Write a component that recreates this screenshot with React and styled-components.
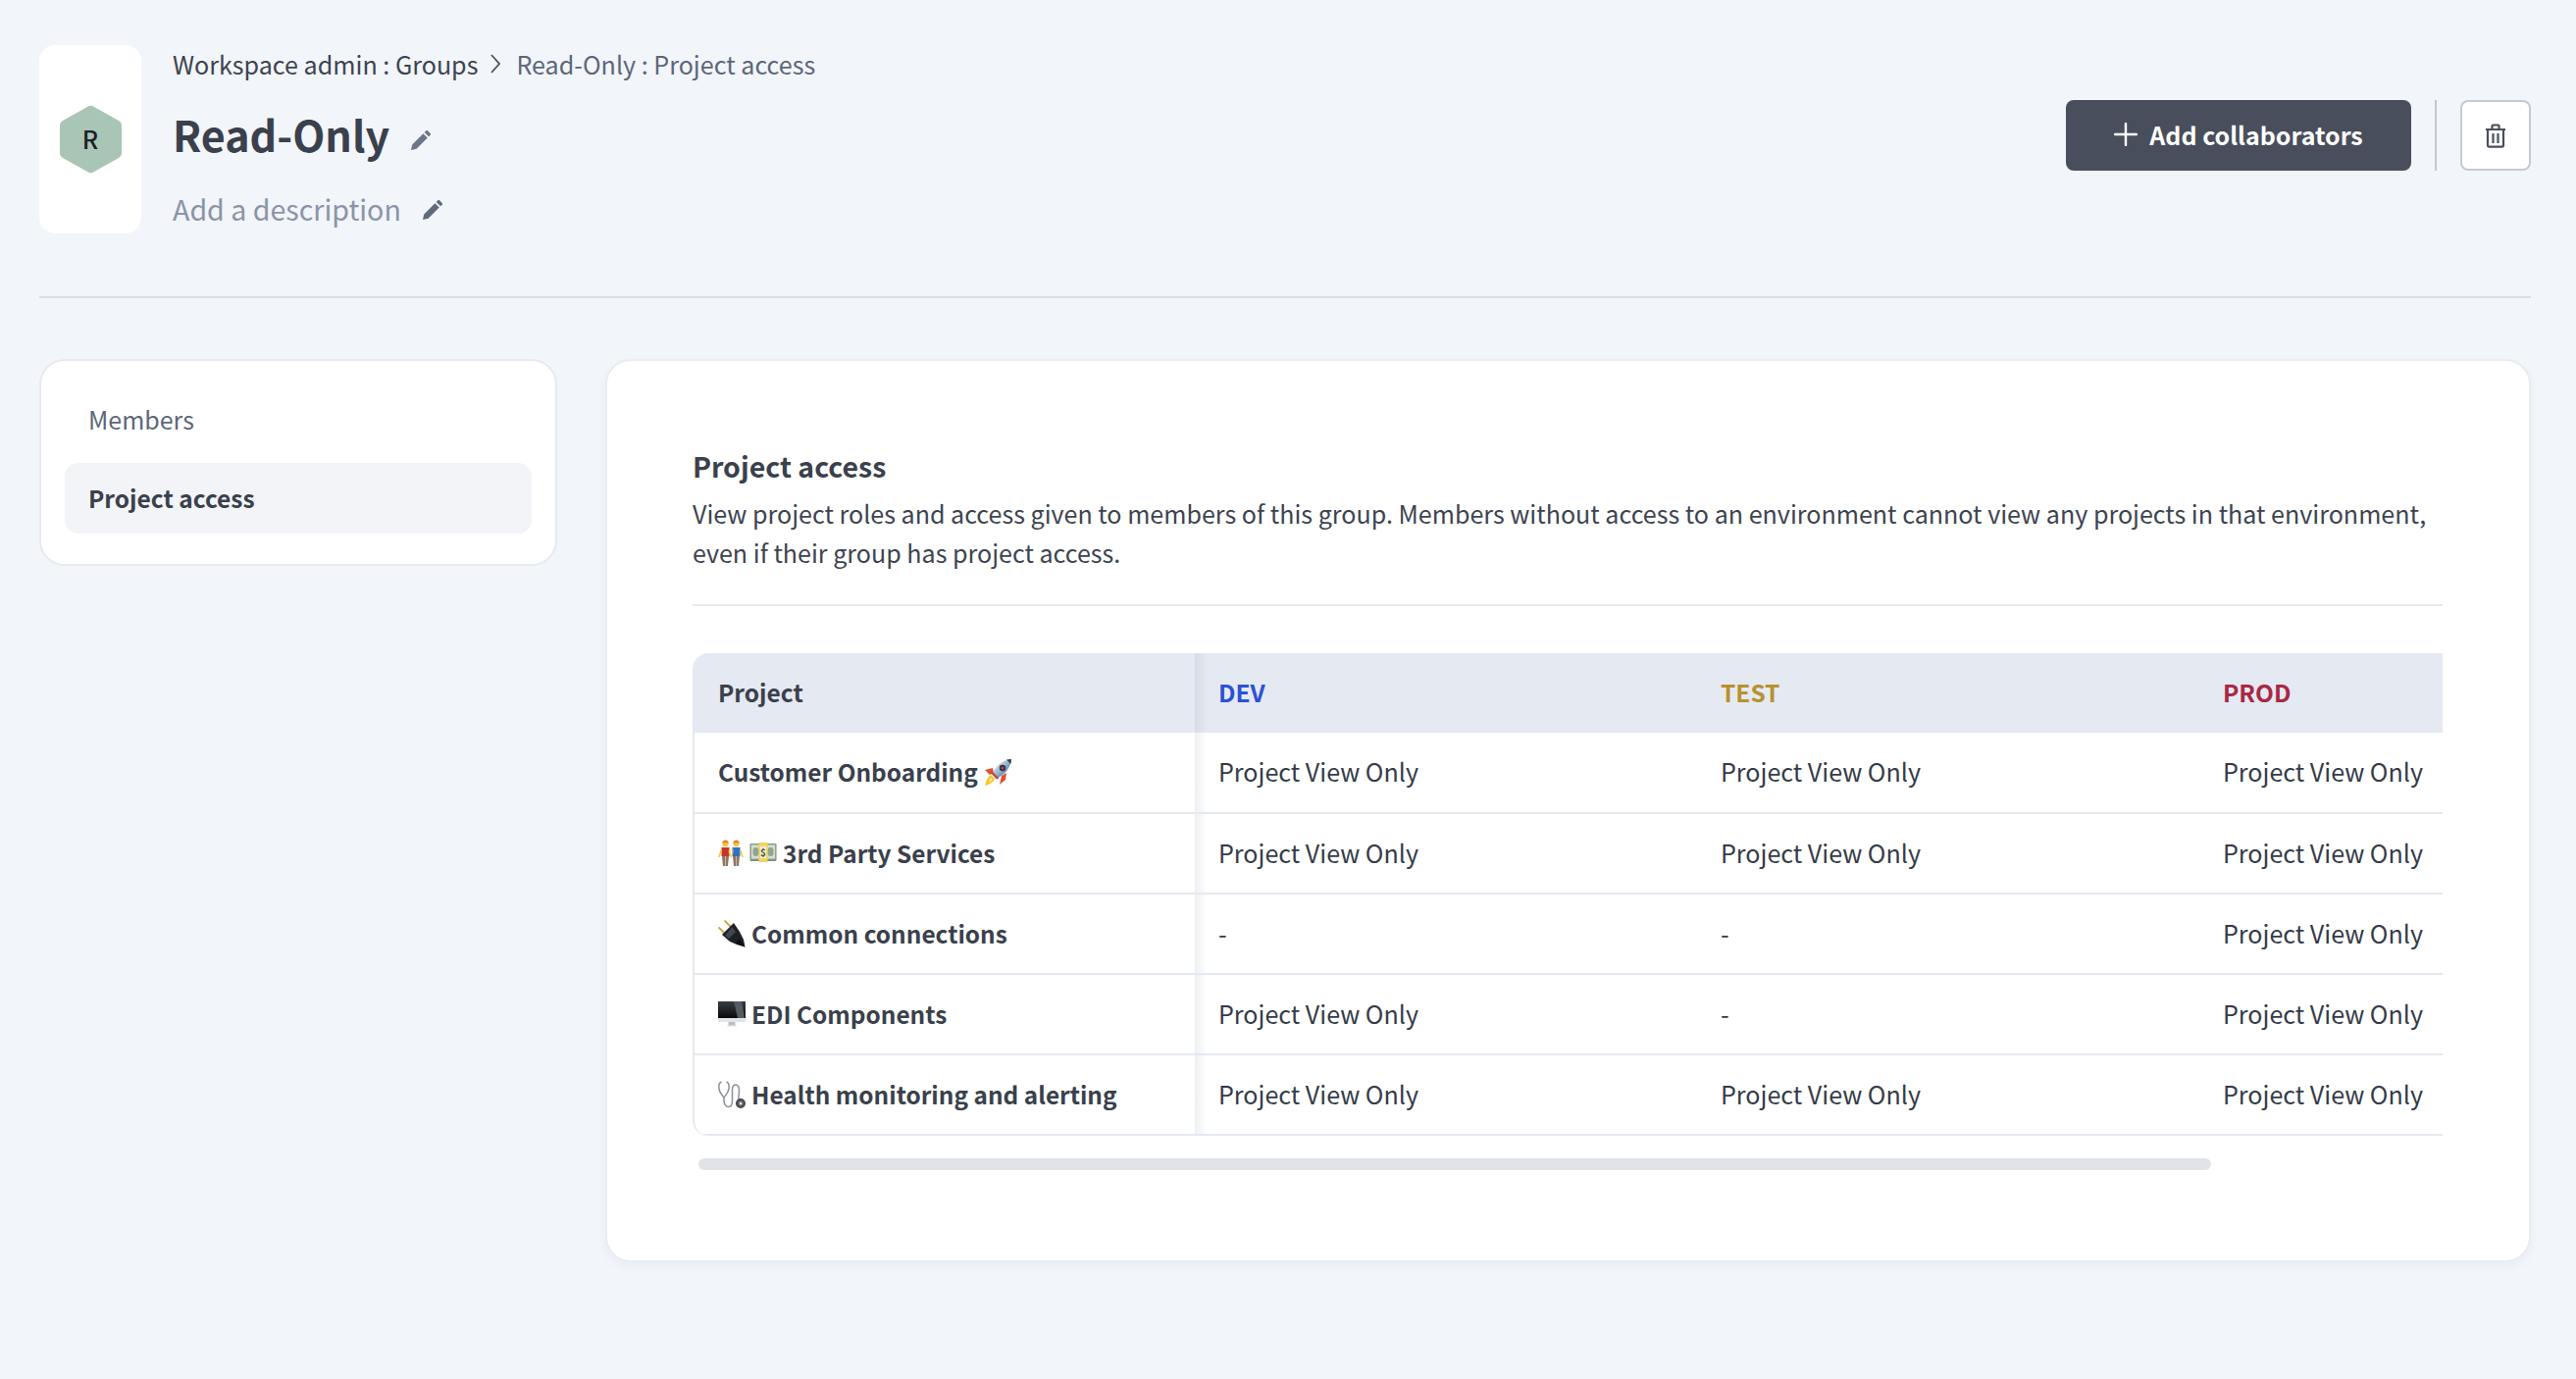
import React from 'react';
import styled, { createGlobalStyle } from 'styled-components';

const GlobalStyle = createGlobalStyle`
    html, body {
        margin: 0;
        padding: 0;
        background: #f2f5fa;
    }
    body {
        font-family: "Noto Sans CJK SC", "Noto Sans", sans-serif;
        color: #353b48;
    }
    * {
        box-sizing: border-box;
    }
`;

const Page = styled.div`
    width: 2626px;
    height: 1406px;
    padding: 46px 46px 0 40px;
    overflow: hidden;
`;

const Header = styled.header`
    display: flex;
    justify-content: space-between;
    padding-bottom: 64px;
    border-bottom: 2px solid #d9dee8;
`;

const HeaderLeft = styled.div`
    display: flex;
    gap: 32px;
`;

const IconCard = styled.div`
    width: 104px;
    height: 192px;
    background: white;
    border-radius: 16px;
    display: flex;
    align-items: center;
    justify-content: center;
`;

const Hexagon = styled.div`
    position: relative;
    width: 63px;
    height: 70px;
    display: flex;
    align-items: center;
    justify-content: center;
    font-size: 25px;
    font-weight: 500;
    color: #1c2129;

    svg {
        position: absolute;
        inset: 0;
    }
    span {
        position: relative;
        top: -1px;
    }
`;

const HeaderText = styled.div`
    display: flex;
    flex-direction: column;
`;

const Breadcrumb = styled.nav`
    display: flex;
    align-items: center;
    height: 40px;
    margin-top: -1px;
    font-size: 25.1px;
    line-height: 40px;
    color: #3d4450;
`;

const Crumb = styled.span`
    color: ${(p) => (p.$current ? '#5c6779' : '#3d4450')};
`;

const Chevron = styled.svg`
    width: 12px;
    height: 20px;
    margin: 0 15px 0 12px;
`;

const TitleRow = styled.div`
    display: flex;
    align-items: center;
    height: 60px;
    margin-top: 21px;
    gap: 21px;
`;

const Title = styled.h1`
    margin: 0;
    font-size: 43px;
    line-height: 60px;
    font-weight: 700;
    color: #3a404c;
`;

const DescriptionRow = styled.div`
    display: flex;
    align-items: center;
    height: 44px;
    margin-top: 25px;
    gap: 21px;
`;

const Description = styled.span`
    font-size: 28.6px;
    line-height: 44px;
    color: #8a94a6;
`;

const PencilIcon = styled.svg`
    width: 22px;
    height: 22px;
    color: ${(p) => (p.$dark ? '#5f6b7d' : '#6b7688')};
    margin-top: ${(p) => p.$top || 0}px;
`;

const Actions = styled.div`
    display: flex;
    align-items: stretch;
    height: 72px;
    margin-top: 56px;
`;

const PrimaryButton = styled.button`
    width: 352px;
    border: none;
    border-radius: 8px;
    background: #484e5b;
    color: white;
    font-family: inherit;
    font-size: 25px;
    font-weight: 700;
    display: flex;
    align-items: center;
    justify-content: center;
    gap: 12px;
    padding: 0 0 2px;
`;

const ActionSeparator = styled.div`
    width: 2px;
    margin: 0 24px;
    background: #c2c7d4;
`;

const IconButton = styled.button`
    width: 72px;
    border: 2px solid #c4c9d6;
    border-radius: 8px;
    background: white;
    display: flex;
    align-items: center;
    justify-content: center;
    padding: 0;
`;

const Body = styled.main`
    display: flex;
    align-items: flex-start;
    gap: 49px;
    margin-top: 62px;
`;

const Sidebar = styled.aside`
    width: 528px;
    flex-shrink: 0;
    padding: 24px 24px 23px;
    background: white;
    border: 2px solid #e6eaf1;
    border-radius: 26px;
`;

const SideItem = styled.div`
    height: 72px;
    margin-bottom: 8px;
    padding: 0 24px ${(p) => (p.$active ? '2px' : '3px')};
    display: flex;
    align-items: center;
    border-radius: 14px;
    font-size: ${(p) => (p.$active ? '24.5px' : '25px')};
    font-weight: ${(p) => (p.$active ? 600 : 400)};
    color: ${(p) => (p.$active ? '#3a404c' : '#5c6779')};
    background: ${(p) => (p.$active ? '#f2f4f8' : 'transparent')};
`;

const Panel = styled.section`
    flex: 1;
    min-width: 0;
    height: 921px;
    padding: 85px 88px 0 87px;
    background: white;
    border: 2px solid #e8ecf3;
    border-radius: 26px;
    box-shadow: 0 4px 10px rgba(60, 80, 120, 0.05);
`;

const PanelTitle = styled.h2`
    margin: 0;
    font-size: 28.5px;
    line-height: 44px;
    font-weight: 700;
    color: #3a404c;
`;

const PanelText = styled.p`
    margin: 6px 0 0;
    font-size: 25.07px;
    line-height: 40px;
    color: #3d4450;
    padding-bottom: 33px;
    border-bottom: 2px solid #e6e9f0;
`;

const TableWrap = styled.div`
    margin-top: 48px;
    overflow: hidden;
    border-left: 2px solid #e4e8ef;
    border-radius: 16px 0 0 16px;
`;

const Table = styled.table`
    width: 2046px;
    table-layout: fixed;
    border-collapse: collapse;
`;

const shadowRule = `
    &::after {
        content: '';
        position: absolute;
        top: 0;
        bottom: 0;
        left: 100%;
        width: 12px;
        background: linear-gradient(to right, rgba(90, 105, 135, 0.1), rgba(90, 105, 135, 0));
        z-index: 1;
    }
`;

const HeadCell = styled.th`
    position: relative;
    height: 81px;
    padding: 0 24px 3px;
    text-align: left;
    background: #e5e9f1;
    font-size: 24.5px;
    font-weight: 600;
    color: ${(p) => p.$color || '#3a404c'};

    ${(p) => p.$first && 'width: 510px;'}
    ${(p) => p.$first && shadowRule}
`;

const Cell = styled.td`
    height: 82px;
    padding: 0 24px 3px;
    font-size: 25.07px;
    color: #353b48;
    border-bottom: 2px solid #e4e8ef;
    white-space: nowrap;
    overflow: hidden;
`;

const ProjectCell = styled(Cell)`
    position: relative;
    overflow: visible;
    padding-bottom: 2px;
    font-size: 24.4px;
    font-weight: 600;
    color: #3a404c;
    ${shadowRule}
`;

const ProjectName = styled.div`
    display: flex;
    align-items: center;
    gap: 6px;
`;

const EmojiSvg = styled.svg`
    width: ${(p) => p.$w || 28}px;
    height: 28px;
    flex-shrink: 0;
    margin-top: 1px;
`;

const ScrollThumb = styled.div`
    width: 1542px;
    height: 12px;
    margin: 23px 0 0 6px;
    border-radius: 6px;
    background: #e1e3e8;
`;

const Pencil = ({ dark, top }) => (
    <PencilIcon viewBox="0 0 22 22" $dark={dark} $top={top}>
        <path
            fill="currentColor"
            d="M1 21l1.200-5.600L13.400 4.200l4.400 4.400L6.600 19.800 1 21zM14.700 2.900l1.600-1.600c.5-.5 1.200-.5 1.700 0l2.700 2.700c.5.5.5 1.200 0 1.700l-1.600 1.600-4.400-4.400z"
        />
    </PencilIcon>
);

const TrashIcon = () => (
    <svg width="22" height="25" viewBox="0 0 22 25" fill="none" stroke="#484e5b" strokeWidth="2.200">
        <path d="M1 6h20M7.500 6V2.500c0-.6.4-1 1-1h5c.6 0 1 .4 1 1V6" />
        <path d="M3 6v16c0 1 .6 1.600 1.600 1.600h12.800c1 0 1.600-.6 1.600-1.600V6" />
        <path d="M8.500 10v10M13.500 10v10" />
    </svg>
);

const PlusIcon = () => (
    <svg width="24" height="24" viewBox="0 0 24 24" stroke="white" strokeWidth="2.400" strokeLinecap="round">
        <path d="M12 1v22M1 12h22" />
    </svg>
);

const Rocket = () => (
    <EmojiSvg viewBox="0 0 29 28" $w={29}>
        <defs>
            <linearGradient id="rocketBody" x1="0.2" y1="0.2" x2="0.8" y2="0.8">
                <stop offset="0" stopColor="#dfe7ee" />
                <stop offset="0.55" stopColor="#8fb0cf" />
                <stop offset="1" stopColor="#3d6ea5" />
            </linearGradient>
        </defs>
        <path fill="#f9c623" d="M7 17l4 4c-1 3-5 6-10 7 1-5 3-9 6-11z" />
        <path fill="#fff1b0" d="M7 20l1.500 1.500c-.6 1.400-2 2.500-3.500 3 .4-1.600 1-3 2-4.500z" />
        <path fill="#e2502c" d="M9 10L1 12l5 5 4-2zM18 18l-2 9 6-5 1-7z" />
        <path fill="url(#rocketBody)" d="M8 17C11 9 18 2 28 1c-1 10-8 17-16 20z" />
        <path fill="#37404c" d="M23 1.600c1.600-.3 3.300-.5 5-.6-.1 1.700-.3 3.400-.7 5z" />
        <circle cx="19" cy="10" r="3.200" fill="#2b3440" />
        <circle cx="19" cy="10" r="1.600" fill="#c7402a" />
        <path stroke="#c7402a" strokeWidth="2" d="M7.500 14l7 7" />
    </EmojiSvg>
);

const People = () => (
    <EmojiSvg viewBox="0 0 26 28" $w={26}>
        <circle cx="7.500" cy="4" r="3.200" fill="#f4c63e" />
        <circle cx="18.500" cy="4" r="3.200" fill="#f4c63e" />
        <path fill="#d98c2e" d="M4.300 3.500c.3-2 1.600-3 3.200-3s2.900 1 3.200 3zM15.300 3.500c.3-2 1.600-3 3.200-3s2.900 1 3.200 3z" />
        <path fill="#c8342c" d="M3.500 8h8v9h-8z" />
        <path fill="#2c72c6" d="M14.500 8h8v9h-8z" />
        <path fill="#f4c63e" d="M0 18l3.500-10v5L1.500 18zM11.500 8l2 9 2-9v5l-1.500 5h-1l-2.500-5zM22.500 8L26 18h-1.500l-2-5z" />
        <path fill="#8c7561" d="M4 17h3.300v10H5zM7.800 17H11l-1 10H7.800zM15 17h3.300v10H16zM18.800 17H22l-1 10h-2.200z" />
    </EmojiSvg>
);

const Money = () => (
    <EmojiSvg viewBox="0 0 28 28" $w={28}>
        <rect x="0.500" y="4" width="27" height="18" rx="1" fill="#7d8d7e" />
        <rect x="1.500" y="5" width="25" height="15" fill="#d4decf" stroke="#93a392" strokeWidth="1" />
        <rect x="3.500" y="8" width="6" height="9" rx="3" fill="#93a392" />
        <rect x="18.500" y="8" width="6" height="9" rx="3" fill="#93a392" />
        <rect x="9.500" y="3" width="9" height="20" fill="#f5d45e" />
        <rect x="11" y="7" width="6" height="12" fill="#f3f1d8" />
        <text x="14" y="17" fontSize="10" fontWeight="700" textAnchor="middle" fill="#4f5436">$</text>
    </EmojiSvg>
);

const Plug = () => (
    <EmojiSvg viewBox="0 0 28 28" $w={28}>
        <path stroke="#c9a73e" strokeWidth="1.800" d="M6.500.5l7.500 7.500M.5 7.500L8 15" />
        <path fill="#1d2024" d="M4 15L16 3l6 9 4 8 1.500 7.500L19 25l-7-3z" />
        <path fill="#41454c" d="M14 7l4 5-7 7-4-3z" />
        <path fill="#0e0f11" d="M21 19l6.500 8.500L18 24z" />
    </EmojiSvg>
);

const Monitor = () => (
    <EmojiSvg viewBox="0 0 28 28" $w={28}>
        <defs>
            <linearGradient id="monitorScreen" x1="0" y1="0" x2="0" y2="1">
                <stop offset="0" stopColor="#3a3d42" />
                <stop offset="1" stopColor="#08090b" />
            </linearGradient>
        </defs>
        <path fill="url(#monitorScreen)" d="M0 1h28v17H0z" />
        <path fill="#565a61" d="M16 1h8l3 17h-7z" />
        <path fill="#e3e5e8" d="M0 18h28v4H0z" />
        <path fill="#b9bdc3" d="M10.500 22h7v3h-7z" />
        <path fill="#d8dade" d="M9.500 25h9v1.500h-9z" />
    </EmojiSvg>
);

const Stethoscope = () => (
    <EmojiSvg viewBox="0 0 28 28" $w={28} fill="none" stroke="#8d9197" strokeWidth="1.500">
        <path d="M3.500 1C1 2 .5 5 1 8.500c.7 4 3 6 5 8.500 1.500-2 4-4.500 5-8.500C11.500 5 11 2 8.500 1" />
        <path d="M6 17v3c0 3.500 2 6.500 4.500 6.500s4-2.500 4-6V9c0-3 1.500-5 3.500-5 2.500 0 3.500 3 3.500 6 0 3-1 7-.5 9" />
        <circle cx="23" cy="23" r="4.200" fill="#5b5f65" stroke="#3e4147" />
        <circle cx="23" cy="23" r="1.500" fill="#e7e9ec" stroke="none" />
    </EmojiSvg>
);

const rows = [
    { name: 'Customer Onboarding', after: <Rocket />, dev: true, test: true, prod: true },
    { name: '3rd Party Services', before: [<People key="p" />, <Money key="m" />], dev: true, test: true, prod: true },
    { name: 'Common connections', before: <Plug />, dev: false, test: false, prod: true },
    { name: 'EDI Components', before: <Monitor />, dev: true, test: false, prod: true },
    { name: 'Health monitoring and alerting', before: <Stethoscope />, dev: true, test: true, prod: true },
];

const access = (has) => (has ? 'Project View Only' : '-');

const App = () => (
    <Page>
        <GlobalStyle />
        <Header>
            <HeaderLeft>
                <IconCard>
                    <Hexagon>
                        <svg viewBox="0 0 63 70" width="63" height="70">
                            <path
                                fill="#a9c5b5"
                                d="M28 2c2-1.600 5-1.600 7 0l25 14c2 1.200 3 3 3 5v28c0 2-1 3.800-3 5L35 68c-2 1.600-5 1.600-7 0L3 54c-2-1.200-3-3-3-5V21c0-2 1-3.800 3-5z"
                            />
                        </svg>
                        <span>R</span>
                    </Hexagon>
                </IconCard>
                <HeaderText>
                    <Breadcrumb>
                        <Crumb>Workspace admin : Groups</Crumb>
                        <Chevron viewBox="0 0 12 20" fill="none" stroke="#4b5361" strokeWidth="1.800">
                            <path d="M2 1l8 9-8 9" />
                        </Chevron>
                        <Crumb $current>Read-Only : Project access</Crumb>
                    </Breadcrumb>
                    <TitleRow>
                        <Title>Read-Only</Title>
                        <Pencil top={13} />
                    </TitleRow>
                    <DescriptionRow>
                        <Description>Add a description</Description>
                        <Pencil dark top={1} />
                    </DescriptionRow>
                </HeaderText>
            </HeaderLeft>
            <Actions>
                <PrimaryButton>
                    <PlusIcon />
                    Add collaborators
                </PrimaryButton>
                <ActionSeparator />
                <IconButton>
                    <TrashIcon />
                </IconButton>
            </Actions>
        </Header>
        <Body>
            <Sidebar>
                <SideItem>Members</SideItem>
                <SideItem $active>Project access</SideItem>
            </Sidebar>
            <Panel>
                <PanelTitle>Project access</PanelTitle>
                <PanelText>
                    View project roles and access given to members of this group. Members without access to an
                    environment cannot view any projects in that environment, even if their group has project access.
                </PanelText>
                <TableWrap>
                    <Table>
                        <thead>
                            <tr>
                                <HeadCell $first>Project</HeadCell>
                                <HeadCell $color="#2b50d8">DEV</HeadCell>
                                <HeadCell $color="#b8912e">TEST</HeadCell>
                                <HeadCell $color="#a82845">PROD</HeadCell>
                            </tr>
                        </thead>
                        <tbody>
                            {rows.map((row) => (
                                <tr key={row.name}>
                                    <ProjectCell>
                                        <ProjectName>
                                            {row.before}
                                            {row.name}
                                            {row.after}
                                        </ProjectName>
                                    </ProjectCell>
                                    <Cell>{access(row.dev)}</Cell>
                                    <Cell>{access(row.test)}</Cell>
                                    <Cell>{access(row.prod)}</Cell>
                                </tr>
                            ))}
                        </tbody>
                    </Table>
                </TableWrap>
                <ScrollThumb />
            </Panel>
        </Body>
    </Page>
);

export default App;
